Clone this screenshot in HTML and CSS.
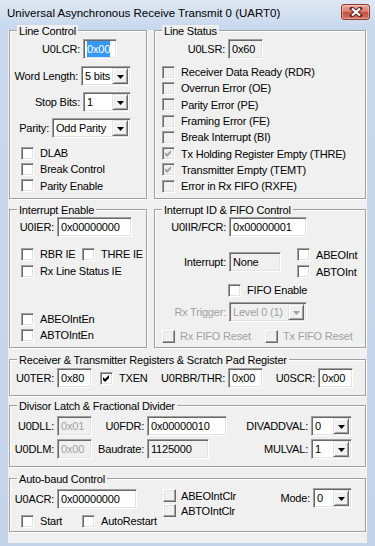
FILE: index.html
```
<!DOCTYPE html>
<html>
<head>
	<title>UART0</title>
	<link rel="stylesheet" href="styles.css">
</head>
<body>
<div class="window">
	<div class="titlebar">
		<span class="title">Universal Asynchronous Receive Transmit 0 (UART0)</span>
		<span class="close"><svg width="14" height="10" viewBox="0 0 14 10"><path d="M3 1.5L11 8.5M11 1.5L3 8.5" stroke="#5a2a26" stroke-width="4" stroke-linecap="square"/><path d="M3 1.5L11 8.5M11 1.5L3 8.5" stroke="#fff" stroke-width="2.2"/></svg></span>
	</div>
	<div class="client">
		<div class="top-row">
			<!-- Line Control -->
			<div class="group lc">
				<div class="legend">Line Control</div>
				<div class="frow lc-row r-lcr"><span>U0LCR:</span><span class="edit w34"><span class="hl">0x00</span></span></div>
				<div class="frow lc-row r-word"><span>Word Length:</span><span class="combo w50"><span class="cv">5 bits</span><span class="drop"><svg width="7" height="4"><path d="M0 0h7L3.5 4z"/></svg></span></span></div>
				<div class="frow lc-row"><span>Stop Bits:</span><span class="combo w48"><span class="cv">1</span><span class="drop"><svg width="7" height="4"><path d="M0 0h7L3.5 4z"/></svg></span></span></div>
				<div class="frow lc-row"><span>Parity:</span><span class="combo w79"><span class="cv">Odd Parity</span><span class="drop"><svg width="7" height="4"><path d="M0 0h7L3.5 4z"/></svg></span></span></div>
				<div class="checks lc-checks">
					<div class="cb"><span class="box"></span>DLAB</div>
					<div class="cb"><span class="box"></span>Break Control</div>
					<div class="cb"><span class="box"></span>Parity Enable</div>
				</div>
			</div>
			<!-- Line Status -->
			<div class="group ls">
				<div class="legend">Line Status</div>
				<div class="frow r-lsr"><span class="lbl w70">U0LSR:</span><span class="edit ro w35">0x60</span></div>
				<div class="checks ls-checks">
					<div class="cb"><span class="box dis"></span>Receiver Data Ready (RDR)</div>
					<div class="cb"><span class="box dis"></span>Overrun Error (OE)</div>
					<div class="cb"><span class="box dis"></span>Parity Error (PE)</div>
					<div class="cb"><span class="box dis"></span>Framing Error (FE)</div>
					<div class="cb"><span class="box dis"></span>Break Interrupt (BI)</div>
					<div class="cb"><span class="box dis"><svg width="7" height="7"><path d="M0 2L2 4L6 0V3L2 7L0 5Z" fill="#a0a0a0"/></svg></span>Tx Holding Register Empty (THRE)</div>
					<div class="cb"><span class="box dis"><svg width="7" height="7"><path d="M0 2L2 4L6 0V3L2 7L0 5Z" fill="#a0a0a0"/></svg></span>Transmitter Empty (TEMT)</div>
					<div class="cb"><span class="box dis"></span>Error in Rx FIFO (RXFE)</div>
				</div>
			</div>
		</div>

		<div class="mid-row">
			<!-- Interrupt Enable -->
			<div class="group ie">
				<div class="legend">Interrupt Enable</div>
				<div class="frow r-ier"><span class="lbl w44">U0IER:</span><span class="edit w75">0x00000000</span></div>
				<div class="pair ie-pair">
					<div class="cb w61"><span class="box"></span>RBR IE</div>
					<div class="cb"><span class="box"></span>THRE IE</div>
				</div>
				<div class="cb ie-rx"><span class="box"></span>Rx Line Status IE</div>
				<div class="checks ie-ab">
					<div class="cb"><span class="box"></span>ABEOIntEn</div>
					<div class="cb"><span class="box"></span>ABTOIntEn</div>
				</div>
			</div>
			<!-- Interrupt ID & FIFO Control -->
			<div class="group iid">
				<div class="legend">Interrupt ID &amp; FIFO Control</div>
				<div class="frow r-iir"><span class="lbl w71">U0IIR/FCR:</span><span class="edit w78">0x00000001</span></div>
				<div class="iid-mid">
					<div class="frow r-int"><span class="lbl w71">Interrupt:</span><span class="edit ro w52">None</span></div>
					<div class="iid-checks">
						<div class="cb"><span class="box"></span>ABEOInt</div>
						<div class="cb"><span class="box"></span>ABTOInt</div>
					</div>
				</div>
				<div class="cb fifo"><span class="box"></span>FIFO Enable</div>
				<div class="frow r-trig"><span class="lbl w71 off">Rx Trigger:</span><span class="combo dis w78"><span class="cv">Level 0 (1)</span><span class="drop"><svg width="7" height="4"><path d="M0 0h7L3.5 4z" fill="#a0a0a0"/></svg></span></span></div>
				<div class="pair resets">
					<div class="cb w103 off"><span class="pbox"></span>Rx FIFO Reset</div>
					<div class="cb off"><span class="pbox"></span>Tx FIFO Reset</div>
				</div>
			</div>
		</div>

		<!-- Receiver & Transmitter Registers -->
		<div class="group rtr">
			<div class="legend">Receiver &amp; Transmitter Registers &amp; Scratch Pad Register</div>
			<div class="frow r-ter">
				<span class="lbl w44">U0TER:</span><span class="edit w35">0x80</span>
				<div class="cb w54 txen"><span class="box"><svg width="7" height="7"><path d="M0 2L2 4L6 0V3L2 7L0 5Z"/></svg></span>TXEN</div>
				<span class="lbl w68">U0RBR/THR:</span><span class="edit w35">0x00</span>
				<span class="lbl w49">U0SCR:</span><span class="edit w35">0x00</span>
			</div>
		</div>

		<!-- Divisor Latch -->
		<div class="group dl">
			<div class="legend">Divisor Latch &amp; Fractional Divider</div>
			<div class="dl-grid">
				<span class="glbl">U0DLL:</span><span class="edit ro dim">0x01</span>
				<span class="glbl">U0FDR:</span><span class="edit">0x00000010</span>
				<span class="glbl">DIVADDVAL:</span><span class="combo"><span class="cv">0</span><span class="drop"><svg width="7" height="4"><path d="M0 0h7L3.5 4z"/></svg></span></span>
				<span class="glbl">U0DLM:</span><span class="edit ro dim">0x00</span>
				<span class="glbl">Baudrate:</span><span class="edit ro w62">1125000</span>
				<span class="glbl">MULVAL:</span><span class="combo"><span class="cv">1</span><span class="drop"><svg width="7" height="4"><path d="M0 0h7L3.5 4z"/></svg></span></span>
			</div>
		</div>

		<!-- Auto-baud Control -->
		<div class="group ab">
			<div class="legend">Auto-baud Control</div>
			<div class="ab-body">
				<div class="ab-left">
					<div class="frow r-acr"><span class="lbl w44">U0ACR:</span><span class="edit w80">0x00000000</span></div>
					<div class="pair ab-pair">
						<div class="cb w61"><span class="box"></span>Start</div>
						<div class="cb"><span class="box"></span>AutoRestart</div>
					</div>
				</div>
				<div class="ab-mid">
					<div class="cb pcb"><span class="pbox"></span>ABEOIntClr</div>
					<div class="cb pcb"><span class="pbox"></span>ABTOIntClr</div>
				</div>
				<div class="frow ab-mode"><span>Mode:</span><span class="combo w39"><span class="cv">0</span><span class="drop"><svg width="7" height="4"><path d="M0 0h7L3.5 4z"/></svg></span></span></div>
			</div>
		</div>
	</div>
</div>
</body>
</html>
```

FILE: styles.css
```
* { box-sizing: border-box; }
body { margin: 0; font-family: "Liberation Sans", Arial, sans-serif; font-size: 11px; letter-spacing: -0.2px; color: #000; }

.window {
	width: 375px; height: 546px;
	background: linear-gradient(#dfe8f4, #c9d9ed 26px, #c3d4ea);
	overflow: hidden;
}
.titlebar { height: 26px; display: flex; align-items: center; padding-left: 7px; }
.title { font-size: 11.5px; letter-spacing: 0; margin-top: -1px; }
.close {
	margin-left: auto; margin-right: 5px; margin-top: -3px;
	width: 29px; height: 16px;
	display: flex; align-items: center; justify-content: center;
	border: 1px solid #8a3b34; border-radius: 3px;
	background: linear-gradient(#eaa99e, #d8796b 50%, #c44f3d 51%, #d5735f);
	box-shadow: inset 0 0 0 1px rgba(255,255,255,0.35);
}

.client { margin: 0 8px; height: 513px; background: #f0f0f0; padding-left: 1px; }

/* group boxes, etched */
.group { border: 1px solid #a0a0a0; box-shadow: 1px 1px 0 #fff, inset 1px 1px 0 #fff; }
.legend { width: max-content; height: 12px; line-height: 12px; margin: -6px 0 0 7px; padding: 0 2px; background: #f0f0f0; }

.top-row { display: flex; gap: 7px; margin-top: 4px; }
.mid-row { display: flex; gap: 7px; margin-top: 10px; }
.lc { width: 138px; height: 169px; }
.ls { width: 212px; height: 169px; }
.ie { width: 138px; height: 139px; }
.iid { width: 212px; height: 139px; }
.rtr { width: 357px; height: 37px; margin-top: 11px; }
.dl { width: 357px; height: 62px; margin-top: 9px; }
.ab { width: 357px; height: 54px; margin-top: 11px; }

/* rows */
.frow { display: flex; align-items: center; gap: 3px; height: 20px; }
.lbl { flex: none; text-align: right; }
.lc-row { justify-content: flex-end; padding-right: 15px; margin-top: 6px; }
.r-lcr { margin-top: 2px; padding-right: 29px; }
.r-word { margin-top: 7px; }

/* controls */
.edit, .combo {
	flex: none; height: 20px; display: flex; align-items: center;
	background: #fff;
	border: 1px solid; border-color: #a0a0a0 #fff #fff #a0a0a0;
	box-shadow: inset 1px 1px 0 #696969, inset -1px -1px 0 #e3e3e3;
	white-space: nowrap; overflow: hidden;
}
.edit { padding-left: 3px; }
.edit.ro { background: #f0f0f0; }
.edit.dim { color: #a0a0a0; }
.hl { background: #3399ff; color: #fff; padding: 2px 0; }
.combo { padding: 1px; }
.cv { flex: 1; padding-left: 2px; }
.drop {
	width: 16px; height: 16px; margin: 0 1px 0 0;
	display: flex; align-items: center; justify-content: center;
	background: #f0f0f0;
	border: 1px solid; border-color: #e3e3e3 #696969 #696969 #e3e3e3;
	box-shadow: inset 1px 1px 0 #fff, inset -1px -1px 0 #a0a0a0;
}
.drop svg { display: block; margin-top: 1px; }
.combo.dis { background: #f0f0f0; color: #a0a0a0; }
.off { color: #a0a0a0; }

/* checkboxes */
.cb { display: flex; align-items: center; height: 16px; white-space: nowrap; }
.checks .cb { height: 16.3px; }
.box {
	flex: none; width: 13px; height: 13px; margin-right: 6px; padding: 2px;
	background: #fff;
	border: 1px solid; border-color: #a0a0a0 #fff #fff #a0a0a0;
	box-shadow: inset 1px 1px 0 #696969, inset -1px -1px 0 #e3e3e3;
}
.box.dis { background: #f0f0f0; }
.box svg { display: block; }
.pbox {
	flex: none; width: 13px; height: 13px; margin-right: 5px;
	background: #f0f0f0;
	border: 1px solid; border-color: #fff #696969 #696969 #fff;
	box-shadow: inset -1px -1px 0 #a0a0a0, inset 1px 1px 0 #e3e3e3;
}
.pair { display: flex; }

/* widths */
.w34 { width: 34px; } .w35 { width: 35px; } .w39 { width: 39px; } .w44 { width: 44px; }
.w48 { width: 48px; } .w49 { width: 49px; } .w50 { width: 50px; } .w52 { width: 52px; }
.w54 { width: 54px; } .w61 { width: 61px; } .w62 { width: 62px; } .w68 { width: 68px; }
.w70 { width: 70px; } .w71 { width: 71px; } .w75 { width: 75px; } .w78 { width: 78px; }
.w79 { width: 79px; } .w80 { width: 80px; } .w103 { width: 103px; }

/* line control / status */
.lc-checks { margin-top: 7px; padding-left: 11px; }
.r-lsr { margin-top: 2px; }
.ls-checks { margin-top: 5px; padding-left: 7px; }

/* interrupt enable */
.r-ier { margin-top: 1px; }
.ie-pair { margin-top: 9px; padding-left: 11px; }
.ie-rx { margin-top: 1px; padding-left: 11px; }
.ie-ab { margin-top: 32px; padding-left: 11px; }
.ie-ab .cb { height: 16px; }

/* interrupt id */
.r-iir { margin-top: 1px; }
.iid-mid { display: flex; margin-top: 9px; }
.r-int { margin-top: 6px; }
.iid-checks { margin-left: 16px; }
.iid-checks .cb { height: 17px; }
.fifo { margin-top: 2px; padding-left: 73px; }
.r-trig { margin-top: 4px; }
.resets { margin-top: 6px; padding-left: 7px; }

/* registers */
.r-ter { margin-top: 2px; }
.txen { margin-left: 5px; }

/* divisor */
.dl-grid {
	display: grid; margin-top: 4px;
	grid-template-columns: 47px 35px 55px 80px 84px 41px;
	grid-auto-rows: 20px; row-gap: 3px;
}
.glbl { text-align: right; padding-right: 3px; align-self: center; }
.w62 { justify-self: start; }

/* auto-baud */
.ab-body { display: flex; }
.ab-left { width: 153px; }
.r-acr { margin-top: 4px; }
.ab-pair { margin-top: 4px; padding-left: 11px; }
.ab-mid { margin-top: 3px; }
.pcb { height: 15px; }
.ab-mode { margin: 3px 13px 0 auto; }
```
